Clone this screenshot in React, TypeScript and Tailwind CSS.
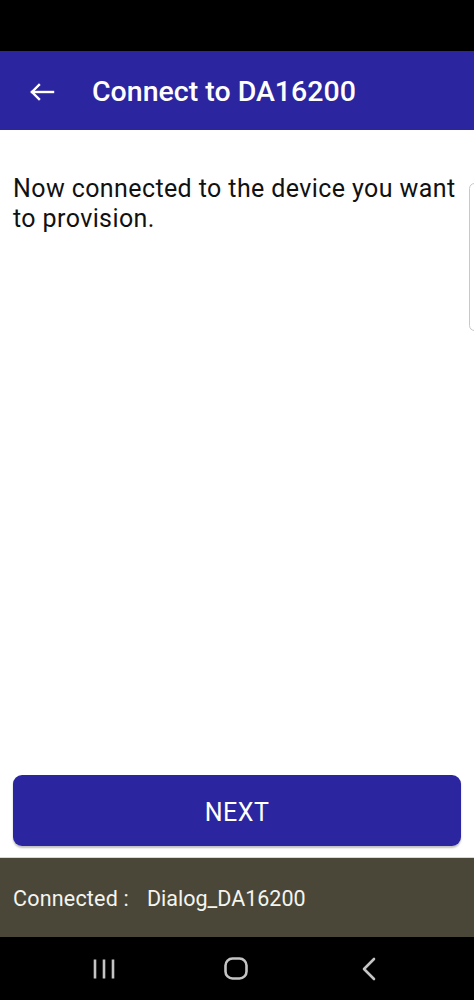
import React from "react"

const font = { fontFamily: "Roboto, 'Noto Sans', sans-serif" }

function BackArrow() {
  return (
    <svg width="26" height="18" viewBox="0 0 26 18" fill="none" stroke="white" strokeWidth="2.4" strokeLinecap="square">
      <path d="M3 9H24" />
      <path d="M10 2L3 9L10 16" />
    </svg>
  )
}

function NavBar() {
  return (
    <div className="h-[63px] bg-black flex items-center pl-[93px]">
      <svg width="22" height="22" viewBox="0 0 22 22" stroke="#c4c4c4" strokeWidth="2.6" fill="none">
        <path d="M2 1.5V20.5M11 1.5V20.5M20 1.5V20.5" />
      </svg>
      <svg width="24" height="23" viewBox="0 0 24 23" stroke="#c4c4c4" strokeWidth="2.6" fill="none" className="ml-[109px]">
        <rect x="1.5" y="1.5" width="21" height="20" rx="7" />
      </svg>
      <svg width="16" height="24" viewBox="0 0 16 24" stroke="#c4c4c4" strokeWidth="2.6" fill="none" strokeLinecap="round" strokeLinejoin="round" className="ml-[113px]">
        <path d="M13 2L3 12L13 22" />
      </svg>
    </div>
  )
}

export default function App() {
  return (
    <div className="w-[474px] h-[1000px] flex flex-col bg-white overflow-hidden" style={font}>
      <div className="h-[51px] bg-black shrink-0" />

      <header className="h-[79px] bg-[#2b259f] flex items-center shrink-0">
        <div className="w-[92px] pl-[29px] pt-[2px] flex items-center">
          <BackArrow />
        </div>
        <h1 className="text-white text-[28.5px] font-medium pt-[3px]">Connect to DA16200</h1>
      </header>

      <main className="relative flex-1 flex flex-col">
        <p className="pl-[13px] pr-[14px] pt-[44px] text-[25px] leading-[30px] tracking-[0.4px] text-[#111]">
          Now connected to the device you want to provision.
        </p>
        <div className="absolute right-[-6px] top-[53px] w-[11px] h-[148px] rounded-[6px] border border-[#c8c8c8] bg-white" />

        <div className="mt-auto px-[13px] pb-[11px]">
          <button className="w-full h-[71px] rounded-[9px] bg-[#2b25a0] text-white text-[25px] font-normal tracking-[0.5px] pt-[4px] shadow-[0_2px_2px_rgba(0,0,0,0.25)]">
            NEXT
          </button>
        </div>
      </main>

      <footer className="h-[80px] bg-[#4a4739] flex items-center px-[13px] pt-[3px] shrink-0 border-t border-[#d8d8d8]">
        <span className="text-[#f4f4ee] text-[21.5px] tracking-[0.2px]">Connected :</span>
        <span className="text-[#f4f4ee] text-[21.5px] ml-[18px]">Dialog_DA16200</span>
      </footer>

      <NavBar />
    </div>
  )
}
